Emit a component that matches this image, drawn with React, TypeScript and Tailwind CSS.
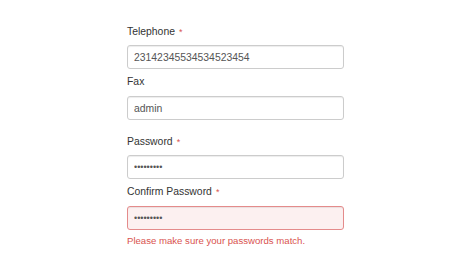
import React from "react";

const inputBase =
  "block w-[217px] h-[24px] px-[6px] rounded-[3px] border text-[10.4px] text-[#555] outline-none shadow-[inset_0_1px_1px_rgba(0,0,0,0.075)]";

const Label = ({ text, required, className }: { text: string; required?: boolean; className?: string }) => (
  <label className={`block leading-[14px] text-[10.4px] text-[#333] ${className ?? ""}`}>
    {text}
    {required && <span className="text-[#d9534f] ml-[4px] text-[9px]">*</span>}
  </label>
);

const App = () => {
  return (
    <div
      className="w-[474px] h-[276px] bg-white pl-[127px] pt-[25px]"
      style={{ fontFamily: '"Liberation Sans", Arial, sans-serif' }}
    >
      <Label text="Telephone" required className="mb-[6px]" />
      <input
        className={`${inputBase} border-[#ccc] bg-white`}
        defaultValue="23142345534534523454"
      />
      <Label text="Fax" className="mt-[6px] mb-[7px]" />
      <input className={`${inputBase} border-[#ccc] bg-white`} defaultValue="admin" />

      <Label text="Password" required className="mt-[15px] mb-[6px]" />
      <input
        type="password"
        className={`${inputBase} border-[#ccc] bg-white !text-[9px] text-[#333]`}
        defaultValue="123456789"
      />
      <Label text="Confirm Password" required className="mt-[6px] mb-[7px]" />
      <input
        type="password"
        className={`${inputBase} border-[#e48b8b] bg-[#fcf0f0] !text-[9px] text-[#333]`}
        defaultValue="123456789"
      />
      <p className="mt-[4px] leading-[14px] text-[9.6px] text-[#d9534f]">
        Please make sure your passwords match.
      </p>
    </div>
  );
};

export default App;
